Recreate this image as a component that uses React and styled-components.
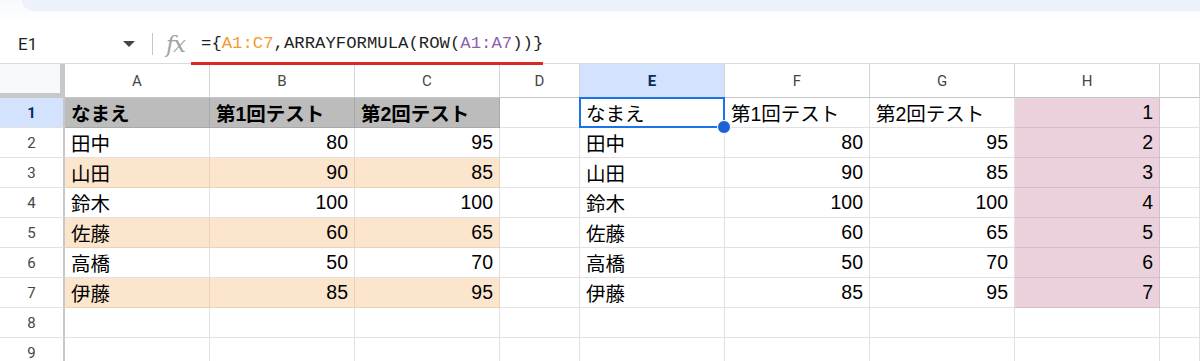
import React from 'react'
import styled, { createGlobalStyle } from 'styled-components'

const Global = createGlobalStyle`
  html, body {
    margin: 0;
    padding: 0;
    background: #ffffff;
    overflow: hidden;
  }
  * { box-sizing: border-box; }
`

const COLS = '65px 145px 145px 145px 80px 145px 145px 145px 145px 1fr'

const Page = styled.div`
  width: 1200px;
  height: 361px;
  overflow: hidden;
  display: flex;
  flex-direction: column;
  background: #ffffff;
  & > * { flex-shrink: 0; }
`
const TopArea = styled.div`
  height: 24px;
  background: linear-gradient(#f7f9fc, #ffffff);
  display: flex;
  flex-direction: column;
`
const Toolbar = styled.div`
  height: 11px;
  margin-left: 22px;
  background: #edf2fa;
  border-bottom-left-radius: 14px;
`
const FormulaBar = styled.div`
  position: relative;
  height: 40px;
  display: flex;
  align-items: center;
  border-bottom: 1px solid #d9dbdd;
`
const NameBox = styled.div`
  width: 152px;
  padding-left: 18px;
  padding-right: 17px;
  display: flex;
  align-items: center;
  justify-content: space-between;
  font-family: Roboto, "Liberation Sans", sans-serif;
  font-size: 17px;
  color: #1f1f1f;
`
const Caret = styled.span`
  width: 0;
  height: 0;
  border-left: 6px solid transparent;
  border-right: 6px solid transparent;
  border-top: 6px solid #444746;
`
const Divider = styled.span`
  width: 1px;
  height: 22px;
  background: #c7c7c7;
`
const Fx = styled.span`
  margin-left: 13px;
  width: 35px;
  font-family: "DejaVu Serif", "Liberation Serif", serif;
  font-style: italic;
  font-size: 23px;
  color: #a3a3a3;
  letter-spacing: -1.5px;
`
const Formula = styled.div`
  font-family: "Liberation Mono", monospace;
  font-size: 17.3px;
  color: #1f1f1f;
  white-space: pre;
`
const Ref = styled.span`
  color: ${p => p.$color};
`
const Underline = styled.div`
  position: absolute;
  left: 191px;
  width: 352px;
  bottom: -2px;
  height: 3px;
  background: #d92a22;
  z-index: 3;
`
const Row = styled.div`
  display: grid;
  grid-template-columns: ${COLS};
  height: ${p => (p.$head ? '34px' : '30px')};
`
const Corner = styled.div`
  background: #f8f9fa;
  border-right: 5px solid #c6c8ca;
  border-bottom: 5px solid #c6c8ca;
`
const ColHead = styled.div`
  display: flex;
  align-items: center;
  justify-content: center;
  font-family: Roboto, "Liberation Sans", sans-serif;
  font-size: 15px;
  color: ${p => (p.$active ? '#0b2a5c' : '#444746')};
  font-weight: ${p => (p.$active ? 700 : 400)};
  background: ${p => (p.$active ? '#d3e3fd' : '#ffffff')};
  border-right: 1px solid #d3d5d7;
  border-bottom: 1px solid #c4c7c5;
`
const RowHead = styled.div`
  display: flex;
  align-items: center;
  justify-content: center;
  font-family: Roboto, "Liberation Sans", sans-serif;
  font-size: 15px;
  color: ${p => (p.$active ? '#0b2a5c' : '#444746')};
  font-weight: ${p => (p.$active ? 700 : 400)};
  background: ${p => (p.$active ? '#d3e3fd' : '#ffffff')};
  border-right: 2px solid #c6c8ca;
  border-bottom: 1px solid #e1e1e1;
`
const Cell = styled.div`
  position: relative;
  display: flex;
  align-items: center;
  justify-content: ${p => (p.$num ? 'flex-end' : 'flex-start')};
  padding: 0 6px;
  font-family: "Liberation Sans", "Noto Sans CJK JP", sans-serif;
  font-size: 19.5px;
  font-weight: ${p => (p.$bold ? 700 : 400)};
  color: #000000;
  background: ${p => p.$bg || '#ffffff'};
  border-right: 1px solid ${p => (p.$bg ? p.$line : '#e1e1e1')};
  border-bottom: 1px solid ${p => (p.$bg ? p.$line : '#e1e1e1')};
  white-space: nowrap;
  overflow: visible;
`
const Selection = styled.div`
  position: absolute;
  left: -1px;
  top: -1px;
  right: -1px;
  bottom: -1px;
  border: 2px solid #1a73e8;
  pointer-events: none;
  z-index: 2;
`
const Handle = styled.span`
  position: absolute;
  right: -8px;
  bottom: -8px;
  width: 14px;
  height: 14px;
  border-radius: 50%;
  background: #1a62d6;
  border: 1px solid #ffffff;
  z-index: 3;
`

const data = [
  ['なまえ', '第1回テスト', '第2回テスト'],
  ['田中', 80, 95],
  ['山田', 90, 85],
  ['鈴木', 100, 100],
  ['佐藤', 60, 65],
  ['高橋', 50, 70],
  ['伊藤', 85, 95],
  ['', '', ''],
  ['', '', ''],
]

const GRAY = '#bcbcbc'
const ORANGE = '#fce5cd'
const PINK = '#ead1dc'

function leftBg(i) {
  if (i === 0) return GRAY
  if (i === 2 || i === 4 || i === 6) return ORANGE
  return null
}

function App() {
  return (
    <Page>
      <Global />
      <TopArea>
        <Toolbar />
      </TopArea>
      <FormulaBar>
        <NameBox>
          <span>E1</span>
          <Caret />
        </NameBox>
        <Divider />
        <Fx>fx</Fx>
        <Formula>
          ={'{'}<Ref $color="#f29b2f">A1:C7</Ref>,ARRAYFORMULA(ROW(<Ref $color="#8e5fb0">A1:A7</Ref>)){'}'}
        </Formula>
        <Underline />
      </FormulaBar>
      <Row $head>
        <Corner />
        {['A', 'B', 'C', 'D', 'E', 'F', 'G', 'H', ''].map((c, i) => (
          <ColHead key={i} $active={c === 'E'}>{c}</ColHead>
        ))}
      </Row>
      {data.map((r, i) => {
        const bg = leftBg(i)
        const line = i === 0 ? '#a9a9a9' : '#ecd2b8'
        const numeric = i > 0
        return (
          <Row key={i}>
            <RowHead $active={i === 0}>{i + 1}</RowHead>
            <Cell $bg={bg} $line={line} $bold={i === 0}>{r[0]}</Cell>
            <Cell $bg={bg} $line={line} $bold={i === 0} $num={numeric}>{r[1]}</Cell>
            <Cell $bg={bg} $line={line} $bold={i === 0} $num={numeric}>{r[2]}</Cell>
            <Cell />
            <Cell>
              {r[0]}
              {i === 0 && (
                <Selection>
                  <Handle />
                </Selection>
              )}
            </Cell>
            <Cell $num={numeric}>{r[1]}</Cell>
            <Cell $num={numeric}>{r[2]}</Cell>
            <Cell $num $bg={i < 7 ? PINK : null} $line="#d9bccb">{i < 7 ? i + 1 : ''}</Cell>
            <Cell />
          </Row>
        )
      })}
    </Page>
  )
}

export default App
